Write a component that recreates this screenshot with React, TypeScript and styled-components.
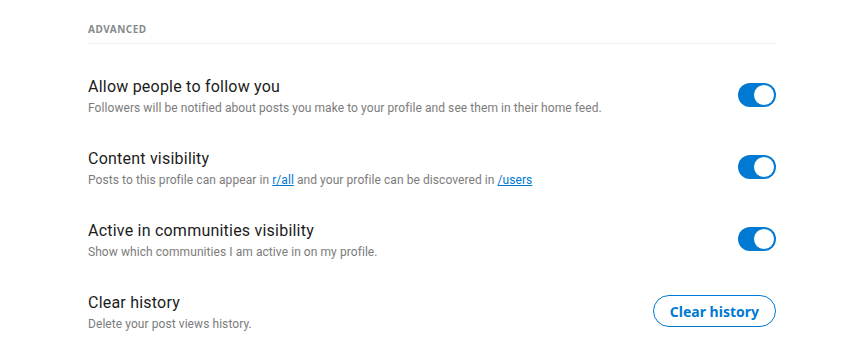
import React from 'react'
import styled, { createGlobalStyle } from 'styled-components'

const GlobalStyle = createGlobalStyle`
  html, body {
    margin: 0;
    padding: 0;
    background: #ffffff;
    font-family: "Noto Sans", "Liberation Sans", sans-serif;
  }
`

const Page = styled.div`
  width: 688px;
  padding: 20px 0 0 88px;
`

const SectionHeader = styled.h3`
  margin: 0 0 31px;
  padding: 0 0 5px;
  border-bottom: 1px solid #edeff1;
  font-size: 10px;
  line-height: 18px;
  font-weight: 700;
  letter-spacing: 0.5px;
  text-transform: uppercase;
  color: #878a8c;
`

const Row = styled.div`
  display: flex;
  align-items: center;
  justify-content: space-between;
  height: 40px;
  margin-bottom: 32px;
`

const Info = styled.div`
  display: flex;
  flex-direction: column;
  padding-top: 3px;
`

const Title = styled.h3`
  margin: 0 0 3px;
  font-family: Roboto, "Noto Sans", sans-serif;
  font-size: 16px;
  line-height: 20px;
  font-weight: 400;
  letter-spacing: 0.22px;
  color: #1c1c1c;
`

const Desc = styled.p`
  margin: 0;
  font-family: Roboto, "Noto Sans", sans-serif;
  font-size: 12px;
  line-height: 16px;
  font-weight: 400;
  letter-spacing: 0.07px;
  color: #7c7c7c;
`

const Link = styled.a`
  color: #0079d3;
  text-decoration: underline;
`

const Toggle = styled.button<{ $on: boolean }>`
  position: relative;
  width: 38px;
  height: 24px;
  padding: 0;
  border: none;
  border-radius: 12px;
  background: ${({ $on }) => ($on ? '#0079d3' : '#edeff1')};
  cursor: pointer;

  &::after {
    content: '';
    position: absolute;
    top: 1px;
    left: ${({ $on }) => ($on ? '15px' : '1px')};
    width: 20px;
    height: 20px;
    border-radius: 50%;
    border: 1px solid #0079d3;
    background: #ffffff;
  }
`

const OutlineButton = styled.button`
  height: 32px;
  padding: 0 16px;
  border: 1px solid #0079d3;
  border-radius: 9999px;
  background: #ffffff;
  color: #0079d3;
  font-family: "Noto Sans", "Liberation Sans", sans-serif;
  font-size: 14px;
  font-weight: 700;
  line-height: 17px;
  cursor: pointer;
`

const settings = [
  {
    title: 'Allow people to follow you',
    desc: <>Followers will be notified about posts you make to your profile and see them in their home feed.</>,
  },
  {
    title: 'Content visibility',
    desc: (
      <>
        Posts to this profile can appear in <Link href="#">r/all</Link> and your profile can be discovered in{' '}
        <Link href="#">/users</Link>
      </>
    ),
  },
  {
    title: 'Active in communities visibility',
    desc: <>Show which communities I am active in on my profile.</>,
  },
]

const App = () => {
  return (
    <Page>
      <GlobalStyle />
      <SectionHeader>Advanced</SectionHeader>
      {settings.map((s) => (
        <Row key={s.title}>
          <Info>
            <Title>{s.title}</Title>
            <Desc>{s.desc}</Desc>
          </Info>
          <Toggle $on aria-label={s.title} />
        </Row>
      ))}
      <Row>
        <Info>
          <Title>Clear history</Title>
          <Desc>Delete your post views history.</Desc>
        </Info>
        <OutlineButton>Clear history</OutlineButton>
      </Row>
    </Page>
  )
}

export default App
